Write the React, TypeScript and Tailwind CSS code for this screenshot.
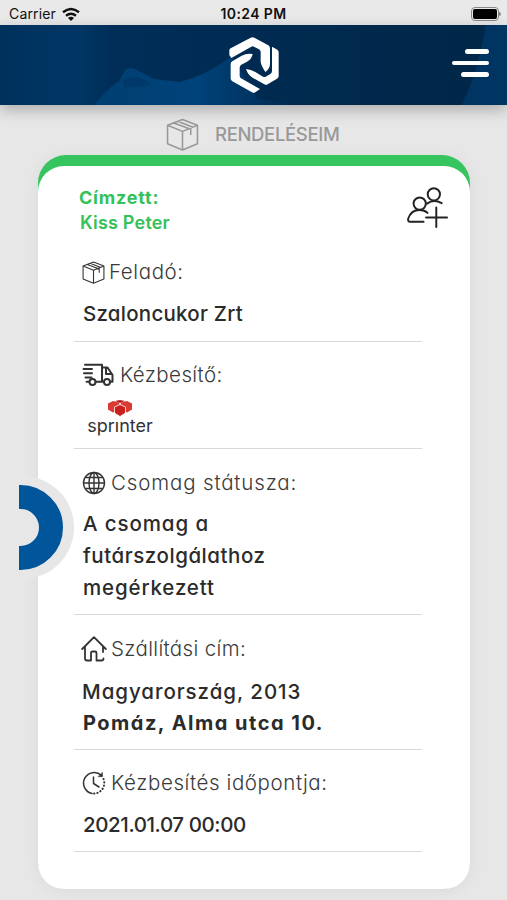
import type { ReactNode } from "react";

const BoxIcon = ({ className }: { className: string }) => (
  <svg viewBox="0 0 32 32" className={className} fill="none" stroke="currentColor" strokeLinejoin="round">
    <path d="M16 1.5 30.5 7v18L16 31 1.5 25V7zM1.5 7 16 13l14.5-6M16 13v18M7.500 4.800 24 11v5.500M11.500 3.200 26 9" />
  </svg>
);

const TruckIcon = () => (
  <svg viewBox="0 0 32 24" className="h-6 w-8 shrink-0" fill="none" stroke="currentColor" strokeWidth="2" strokeLinecap="round" strokeLinejoin="round">
    <path d="M3 1.8h17v17h-6M1.500 6h8.500M2 10.200h8M3.500 14.400h6M20 4.500h5.500l5 7.500v6.800h-2M24 5v6h6M4.500 18.800H7M20 18.800h1.500" />
    <circle cx="10.500" cy="19" r="3" />
    <circle cx="25" cy="19" r="3" />
  </svg>
);

const GlobeIcon = () => (
  <svg viewBox="0 0 24 24" className="size-6 shrink-0" fill="none" stroke="currentColor" strokeWidth="1.4">
    <circle cx="12" cy="12" r="10.500" />
    <ellipse cx="12" cy="12" rx="5" ry="10.500" />
    <path d="M12 1.500v21M1.500 12h21M3.500 6.500h17M3.500 17.500h17" />
  </svg>
);

const HomeIcon = () => (
  <svg viewBox="0 0 26 26" className="-ml-px size-[26px] shrink-0" fill="none" stroke="currentColor" strokeWidth="1.8" strokeLinecap="round" strokeLinejoin="round">
    <path d="M1.200 13 13 1.200 24.800 13M4 11v11.500q0 2 2 2h4V17q0-1.500 1.500-1.500h2.500q1.500 0 1.500 1.500v7.500h5q2 0 2-2M22 11v5" />
  </svg>
);

const ClockIcon = () => (
  <svg viewBox="0 0 24 24" className="size-6 shrink-0" fill="none" stroke="currentColor" strokeWidth="1.5" strokeLinecap="round" strokeLinejoin="round">
    <path d="M10 22.500A10.600 10.600 0 1 1 19.500 4.500M11.500 6v6.500l5.500 3.500" />
    <path d="M20.500 1.500v4.200h-4.200z" fill="currentColor" strokeWidth=".5" />
    <path d="M21.500 8A10.600 10.600 0 0 1 12 22.600" strokeDasharray=".3 3" strokeWidth="2" />
  </svg>
);

const AddPeopleIcon = () => (
  <svg viewBox="0 0 42 42" className="size-[41px]" fill="none" stroke="#222" strokeWidth="2" strokeLinecap="round">
    <circle cx="13" cy="17" r="6.300" />
    <circle cx="27.500" cy="7.500" r="6.300" />
    <path d="M17 35.500H3Q.8 35.500 1.200 32.500 4 23.500 13 23.500q5 0 8 3M20.500 17q7-5 15-.5M30 21v20M19.500 31.300h21.500" />
  </svg>
);

const Logo = () => (
  <svg viewBox="0 0 180 210" className="h-[70px] w-[60px]" fill="#fff">
    <path d="M16 75V61q0-4 4-6l60-32q6-3 11 0l42 23q5 3 5 9v47q0 14-14 24-13-20-14-30V66q0-5-5-8l-15-8q-4-2-8 0L22 84z" />
    <path d="M86 72q-3 16-17 23l-17 9q-5 3-5 9v24q0 5 4 8l57 32-14 10q-5 3-10 0l-59-33q-5-3-5-9v-43q0-6 6-9l27-16q15-8 33-5z" />
    <path d="M144 50l16 9q4 3 4 8v71q0 5-5 8l-28 17q-5 3-10 0l-34-19q-15-8-21-27 15 1 28 9l23 14q4 2 8 0l14-8q5-3 5-9z" />
  </svg>
);

const WifiIcon = () => (
  <svg viewBox="0 0 18 14" className="h-[14px] w-[18px]" fill="none" stroke="#111" strokeWidth="2.4">
    <path d="M1 5.200q8-6.500 16 0M4 8.800q5-4 10 0" />
    <path d="M6 11q3-2.400 6 0l-3 3z" fill="#111" stroke="none" />
  </svg>
);

const SprinterLogo = () => (
  <div className="flex w-[66px] flex-col items-center">
    <svg viewBox="0 0 26 17" className="h-[17px] w-[26px]">
      <path d="M1 3.500 6 1l6 1.500 1 6-7 4-5-3zM25 3.500 20 1l-6 1.500-1 6 7 4 5-3z" fill="#d93a32" />
      <path d="m8 1 5-1 5 1-5 2z" fill="#b91c1c" />
      <path d="m13 4.500 5.500 2.500v6L13 16.500 7.500 13V7z" fill="#c91f1b" stroke="#fff" strokeWidth=".8" />
    </svg>
    <span className="-mt-px text-[18px] leading-5 text-[#333]">sprınter</span>
  </div>
);

type RowProps = {
  icon: ReactNode;
  label: string;
  labelClass: string;
  className: string;
  children: ReactNode;
};

const Row = ({ icon, label, labelClass, className, children }: RowProps) => (
  <section className={`border-b border-[#d9d9d9] pl-2 ${className}`}>
    <div className="flex h-6 items-center text-[#333]">
      {icon}
      <h2 className={`whitespace-nowrap text-[20.5px] font-light leading-6 text-[#3a3a3a] ${labelClass}`}>{label}</h2>
    </div>
    <div className="whitespace-nowrap pl-px text-[20.5px] font-medium leading-8">{children}</div>
  </section>
);

const App = () => {
  return (
    <main className="relative h-[900px] w-[507px] overflow-hidden bg-[#e7e7e7] font-['Inter','Noto_Sans',sans-serif] text-[#2b2b2b] [font-feature-settings:'cv11']">
      {/* Status bar */}
      <div className="grid h-[25px] grid-cols-3 items-center bg-[#e9e9e9] pt-[3px] text-[14px] leading-5 text-[#111] [font-feature-settings:normal]">
        <div className="flex items-center gap-1.5 pl-[9px]">
          <span className="tracking-[0.15px]">Carrier</span>
          <WifiIcon />
        </div>
        <span className="text-center font-semibold tracking-[0.4px]">10:24 PM</span>
        <div className="flex items-center justify-end pr-[6px]">
          <div className="h-[14px] w-[28px] rounded-[4px] border border-[#888] p-px">
            <div className="h-full rounded-[2px] bg-black" />
          </div>
          <div className="h-1 w-0.5 rounded-r bg-[#888]" />
        </div>
      </div>

      {/* Header */}
      <header className="relative flex h-20 items-center justify-center bg-[#002a50] shadow-[0_5px_14px_rgba(0,0,0,0.25)]">
        <svg viewBox="0 0 507 80" className="absolute inset-0 h-20 w-full">
          <defs>
            <linearGradient id="sky" x1="0" x2="1">
              <stop offset="0" stopColor="#00315c" />
              <stop offset=".15" stopColor="#003666" />
              <stop offset=".22" stopColor="#002e58" />
              <stop offset=".55" stopColor="#002a50" />
              <stop offset="1" stopColor="#002747" />
            </linearGradient>
            <linearGradient id="hill" x1="0" x2="1">
              <stop offset="0" stopColor="#003f70" />
              <stop offset=".5" stopColor="#00427a" />
              <stop offset="1" stopColor="#002a50" />
            </linearGradient>
          </defs>
          <path d="M0 0h507v80H0z" fill="url(#sky)" />
          <path d="M94 80q14-17 25-24l6-11q6-4 12 0l17 9 26 3q25-6 52-26l25 43 40 6z" fill="url(#hill)" />
          <path d="M123 56q8-7 20-2l8 5q-16 4-27 3z" fill="#00386a" />
          <path d="M486 0h21v80h-46q15-25 25-80" fill="#003462" />
        </svg>
        <div className="relative">
          <Logo />
        </div>
        <div className="absolute right-[18px] top-[24px] flex flex-col items-end gap-[7px]">
          <span className="h-[4.5px] w-6 rounded-full bg-white" />
          <span className="h-[4.5px] w-[37px] rounded-full bg-white" />
          <span className="h-[4.5px] w-7 rounded-full bg-white" />
        </div>
      </header>

      <div className="flex h-[50px] items-center pl-[166px] pt-2 text-[#999]">
        <BoxIcon className="h-[33px] w-[33px] stroke-[1.5]" />
        <h1 className="ml-4 text-[18.5px] font-medium leading-6 tracking-[-0.35px]">RENDELÉSEIM</h1>
      </div>

      {/* Card */}
      <div className="ml-[38px] h-[734px] w-[432px] rounded-[28px] bg-[#36c45f] pt-[11px] shadow-[0_2px_16px_rgba(0,0,0,0.06)]">
        <div className="h-full rounded-[26px] bg-white pl-9 pt-[19px]">
          <div className="flex h-[75px] justify-between pl-[5px] pr-[22px] text-[#34c159]">
            <div className="text-[18px] leading-[25px]">
              <p className="font-bold tracking-[0.8px]">Címzett:</p>
              <p className="pl-px font-semibold tracking-[0.2px]">Kiss Peter</p>
            </div>
            <div className="pt-0.5">
              <AddPeopleIcon />
            </div>
          </div>
          <div className="w-[348px]">
            <Row className="h-[82px]" icon={<BoxIcon className="size-[23px] stroke-[1.5]" />} label="Feladó:" labelClass="ml-1 tracking-[0.6px]">
              <p className="mt-[14px] tracking-[0.25px]">Szaloncukor Zrt</p>
            </Row>
            <Row className="h-[107px] pt-[21px]" icon={<TruckIcon />} label="Kézbesítő:" labelClass="ml-1.5 tracking-[0.4px]">
              <div className="ml-1 mt-[13px] font-normal">
                <SprinterLogo />
              </div>
            </Row>
            <Row className="h-[166px] pt-[22px]" icon={<GlobeIcon />} label="Csomag státusza:" labelClass="ml-[5px] tracking-[0.85px]">
              <p className="mt-[13px]">
                <span className="tracking-[0.9px]">A csomag a</span>
                <br />
                <span className="tracking-[0.55px]">futárszolgálathoz</span>
                <br />
                <span className="tracking-[0.85px]">megérkezett</span>
              </p>
            </Row>
            <Row className="h-[135px] pt-[22px]" icon={<HomeIcon />} label="Szállítási cím:" labelClass="ml-1 tracking-[0.35px]">
              <p className="-ml-px mt-[15px] tracking-[0.95px]">Magyarország, 2013</p>
              <p className="text-[20px] font-bold leading-[30px] tracking-[1.5px]">Pomáz, Alma utca 10.</p>
            </Row>
            <Row className="h-[102px] pt-[21px]" icon={<ClockIcon />} label="Kézbesítés időpontja:" labelClass="ml-[5px] tracking-[0.6px]">
              <p className="mt-[14px] tracking-[-0.4px]">2021.01.07 00:00</p>
            </Row>
          </div>
        </div>
      </div>

      {/* Side drawer handle */}
      <div className="absolute left-[19px] top-[476px] h-[103px] w-[55px] overflow-hidden">
        <div className="absolute right-0 top-0 size-[103px] rounded-full bg-[#e7e7e7]" />
        <div className="absolute -left-[41px] top-[9px] size-[85px] rounded-full border-[24px] border-[#00559b] bg-[#e7e7e7]" />
      </div>
    </main>
  );
};

export default App;
